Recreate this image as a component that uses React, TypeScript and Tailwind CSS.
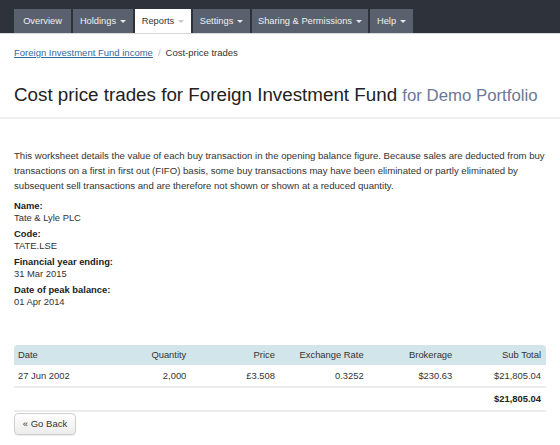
import React from "react";

function Caret({ light }: { light?: boolean }) {
  return (
    <span
      className={
        "ml-[4px] inline-block h-0 w-0 border-x-[3px] border-t-[3px] border-x-transparent " +
        (light ? "border-t-[#c8c8c8]" : "border-t-[#e6e6e6]")
      }
    />
  );
}

function Tab({ label, caret, active, w }: { label: string; caret?: boolean; active?: boolean; w: string }) {
  return (
    <div
      className={
        "flex h-[24px] items-center justify-center pt-[1px] text-[9.3px] " +
        w +
        " " +
        (active ? "bg-white text-[#333]" : "bg-[#59616e] text-[#f0f0f0]")
      }
    >
      <span>{label}</span>
      {caret && <Caret light={active} />}
    </div>
  );
}

function Field({ label, value }: { label: string; value: string }) {
  return (
    <div className="mb-[4px] leading-[12px]">
      <div className="font-bold text-[#222]">{label}</div>
      <div>{value}</div>
    </div>
  );
}

export default function App() {
  return (
    <div className="h-[445px] w-[560px] overflow-hidden bg-white font-['Liberation_Sans',Arial,sans-serif] text-[9.4px] text-[#333]">
      <nav className="flex h-[34px] items-end gap-[2px] border-b border-[#d9d9d9] bg-[#2e333b] px-[14px]">
        <Tab label="Overview" w="w-[57px]" />
        <Tab label="Holdings" caret w="w-[60px]" />
        <Tab label="Reports" caret active w="w-[56px]" />
        <Tab label="Settings" caret w="w-[57px]" />
        <Tab label="Sharing & Permissions" caret w="w-[116px]" />
        <Tab label="Help" caret w="w-[43px]" />
      </nav>

      <div className="px-[14px] pt-[13px] text-[9.5px] leading-[12px]">
        <a className="text-[#2f6aa0] underline">Foreign Investment Fund income</a>
        <span className="px-[5px] text-[#bbb]">/</span>
        <span className="text-[#333]">Cost-price trades</span>
      </div>

      <h1 className="px-[14px] pt-[24px] pb-[9px] text-[18.8px] leading-[24px] text-[#222]">
        Cost price trades for Foreign Investment Fund{" "}
        <span className="text-[16.8px] text-[#6b7896]">for Demo Portfolio</span>
      </h1>
      <div className="h-[2px] bg-[#eeeeee]" />

      <div className="px-[14px] pt-[29px]">
        <p className="mb-[7px] text-[9.6px] leading-[15px]">
          This worksheet details the value of each buy transaction in the opening balance figure. Because sales are deducted from buy
          <br />
          transactions on a first in first out (FIFO) basis, some buy transactions may have been eliminated or partly eliminated by
          <br />
          subsequent sell transactions and are therefore not shown or shown at a reduced quantity.
        </p>

        <Field label="Name:" value="Tate & Lyle PLC" />
        <Field label="Code:" value="TATE.LSE" />
        <Field label="Financial year ending:" value="31 Mar 2015" />
        <Field label="Date of peak balance:" value="01 Apr 2014" />

        <table className="mt-[37px] w-full table-fixed border-collapse leading-[12px]">
          <thead>
            <tr className="bg-[#d2e5eb] text-left">
              <th className="rounded-tl-[4px] px-[4px] py-[4px] text-left font-normal">Date</th>
              <th className="px-[5px] py-[4px] text-right font-normal">Quantity</th>
              <th className="px-[5px] py-[4px] text-right font-normal">Price</th>
              <th className="px-[5px] py-[4px] text-right font-normal">Exchange Rate</th>
              <th className="px-[5px] py-[4px] text-right font-normal">Brokerage</th>
              <th className="rounded-tr-[4px] px-[5px] py-[4px] text-right font-normal">Sub Total</th>
            </tr>
          </thead>
          <tbody>
            <tr className="border-b-2 border-[#ececec]">
              <td className="px-[4px] py-[5px] pb-[4px] text-left">27 Jun 2002</td>
              <td className="px-[5px] py-[5px] pb-[4px] text-right">2,000</td>
              <td className="px-[5px] py-[5px] pb-[4px] text-right">£3.508</td>
              <td className="px-[5px] py-[5px] pb-[4px] text-right">0.3252</td>
              <td className="px-[5px] py-[5px] pb-[4px] text-right">$230.63</td>
              <td className="px-[5px] py-[5px] pb-[4px] text-right">$21,805.04</td>
            </tr>
            <tr className="border-b-2 border-[#ececec]">
              <td className="px-[4px] py-[5px]" />
              <td className="px-[5px] py-[5px]" />
              <td className="px-[5px] py-[5px]" />
              <td className="px-[5px] py-[5px]" />
              <td className="px-[5px] py-[5px]" />
              <td className="px-[5px] py-[5px] text-right font-bold text-[#222]">$21,805.04</td>
            </tr>
          </tbody>
        </table>

        <button className="mt-[1px] flex h-[22px] w-[62px] items-center justify-center rounded-[4px] border border-[#cfcfcf] bg-gradient-to-b from-white to-[#ececec] text-[9.5px] text-[#333] shadow-[0_1px_1px_rgba(0,0,0,0.08)]">
          « Go Back
        </button>
      </div>
    </div>
  );
}
